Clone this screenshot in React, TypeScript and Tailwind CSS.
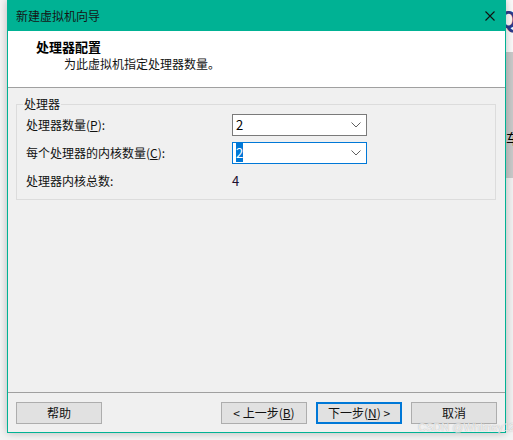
import React from "react";

const font = { fontFamily: '"Noto Sans CJK SC", "Noto Sans", sans-serif' };

function Chevron() {
  return (
    <svg width="10" height="6" viewBox="0 0 10 6" className="block">
      <path d="M0.5 0.5 L5 5 L9.5 0.5" fill="none" stroke="#606060" strokeWidth="1" />
    </svg>
  );
}

function Combo({ focused, children }: { focused?: boolean; children: React.ReactNode }) {
  return (
    <div
      className={
        "w-[135px] h-[22px] bg-white flex items-center justify-between pl-[3px] pr-[5px] border " +
        (focused ? "border-[#0078d7]" : "border-[#7a7a7a]")
      }
    >
      <span className="text-[13px] leading-[16px] text-black">{children}</span>
      <Chevron />
    </div>
  );
}

function Btn({ children, primary }: { children: React.ReactNode; primary?: boolean }) {
  return (
    <div
      className={
        "w-[86px] h-[22px] bg-[#e1e1e1] flex items-center justify-center text-[12px] text-[#111] " +
        (primary ? "border-2 border-[#0078d7]" : "border border-[#adadad]")
      }
    >
      {children}
    </div>
  );
}

export default function App() {
  return (
    <div className="w-[513px] h-[440px] bg-[#f3f3f3] flex flex-col overflow-hidden relative" style={font}>
      <div className="flex h-[433px]">
        <div className="w-[7px] bg-[#f4f4f4]" />
        <div className="relative z-10 w-[499px] h-[433px] flex flex-col bg-[#f0f0f0] border-x border-b border-[#00b294] shadow-[0_0_8px_rgba(0,0,0,0.25)]">
          {/* title bar */}
          <div className="h-[31px] bg-[#00b294] flex items-center justify-between pl-[8px] pr-[10px]">
            <span className="text-[12px] leading-[16px] text-[#151515]">新建虚拟机向导</span>
            <svg width="10" height="10" viewBox="0 0 10 10" className="block">
              <path d="M0.5 0.5 L9.5 9.5 M9.5 0.5 L0.5 9.5" stroke="#111" strokeWidth="1.1" />
            </svg>
          </div>
          {/* header */}
          <div className="h-[56px] bg-white pt-[8px]">
            <div className="pl-[28px] text-[13px] leading-[16px] font-bold text-black">处理器配置</div>
            <div className="pl-[56px] mt-[1px] text-[12px] leading-[16px] text-[#111]">为此虚拟机指定处理器数量。</div>
          </div>
          <div className="h-[1px] bg-[#a0a0a0]" />
          {/* body */}
          <div className="flex-1 flex flex-col pl-[8px] pr-[9px]">
            <fieldset className="mt-[8px] border border-[#dcdcdc] pl-[9px] pt-[2px] pb-[7px]">
              <legend className="ml-[-3px] px-[1px] text-[12px] leading-[16px] text-[#111]">处理器</legend>
              <div className="flex flex-col gap-[6px] text-[12px] text-[#111]">
                <div className="flex items-center h-[22px]">
                  <span className="w-[206px] leading-[16px]">
                    处理器数量(<span className="underline">P</span>):
                  </span>
                  <Combo>2</Combo>
                </div>
                <div className="flex items-center h-[22px]">
                  <span className="w-[206px] leading-[16px]">
                    每个处理器的内核数量(<span className="underline">C</span>):
                  </span>
                  <Combo focused>
                    <span className="bg-[#0078d7] text-white px-[0px]">2</span>
                  </Combo>
                </div>
                <div className="flex items-center h-[22px]">
                  <span className="w-[206px] leading-[16px]">处理器内核总数:</span>
                  <span className="text-[13px] leading-[16px] text-[#1c1030]">4</span>
                </div>
              </div>
            </fieldset>
          </div>
          <div className="h-[1px] bg-[#a0a0a0]" />
          <div className="flex items-center pt-[9px] pb-[8px] pl-[8px] pr-[8px]">
            <Btn>帮助</Btn>
            <div className="flex-1" />
            <div className="flex gap-[9px]">
              <Btn>
                &lt; 上一步(<span className="underline">B</span>)
              </Btn>
              <Btn primary>
                下一步(<span className="underline">N</span>) &gt;
              </Btn>
              <Btn>取消</Btn>
            </div>
          </div>
        </div>
        <div className="w-[7px] flex flex-col overflow-hidden">
          <div className="h-[52px] bg-[#fafafa] overflow-hidden">
            <span className="block ml-[-6px] mt-[6px] text-[22px] leading-[24px] font-bold text-[#2c3c8c]">Q</span>
          </div>
          <div className="h-[126px] bg-[#c9c9c9] overflow-hidden">
            <span className="block mt-[78px] ml-[0px] text-[14px] leading-[16px] text-black whitespace-nowrap">车</span>
          </div>
          <div className="flex-1 bg-[#f1f1f1]" />
        </div>
      </div>
      <div className="flex-1 bg-[#f3f3f3]" />
      <span className="absolute z-20 left-[418px] top-[422px] text-[11px] leading-[11px] text-white/80 whitespace-nowrap [text-shadow:0_0_1px_rgba(0,0,0,0.35)]" style={{ fontFamily: '"Liberation Sans", Arial, sans-serif' }}>
        CSDN @Whitney1225
      </span>
    </div>
  );
}
